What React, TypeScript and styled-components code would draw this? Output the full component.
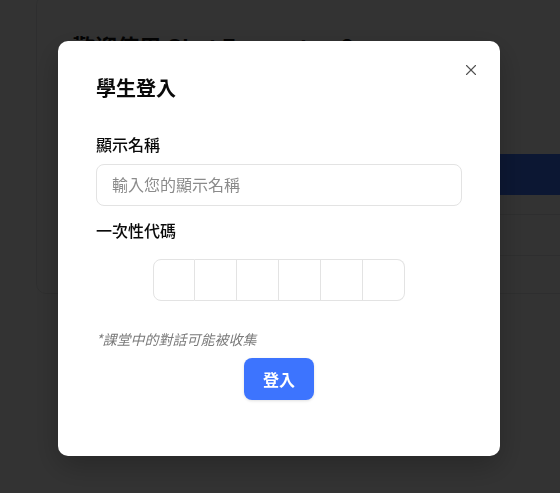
import React from "react";
import styled, { createGlobalStyle } from "styled-components";
import { X } from "lucide-react";

const Global = createGlobalStyle`
  html, body { margin: 0; padding: 0; height: 100%; overflow: hidden; background: #ffffff; }
  body { font-family: "Inter", "Noto Sans CJK TC", "Noto Sans", sans-serif; color: #111; }
  * { box-sizing: border-box; }
`;

const Page = styled.div`
  width: 560px;
  height: 493px;
  padding-left: 36px;
  overflow: hidden;
`;

const BgCard = styled.div`
  margin-top: -5px;
  width: 620px;
  height: 299px;
  border: 1px solid #e6e7ea;
  border-radius: 10px;
  background: #fff;
  padding: 36px 36px;
  display: grid;
  grid-template-columns: 300px 1fr;
  gap: 24px;
`;

const BgTitle = styled.h1`
  margin: 0;
  font-size: 22px;
  line-height: 30px;
  font-weight: 700;
  white-space: nowrap;
  color: #111;
`;

const BgSide = styled.div`
  padding-top: 122px;
  display: flex;
  flex-direction: column;
`;

const BgButton = styled.div`
  height: 41px;
  background: #3d74fe;
  border-radius: 6px 0 0 6px;
`;

const BgRow = styled.div<{ $h: number }>`
  height: ${(p) => p.$h}px;
  border-bottom: 1px solid #e6e7ea;
`;

const Overlay = styled.div`
  position: fixed;
  inset: 0;
  background: rgba(0, 0, 0, 0.8);
  display: flex;
  align-items: flex-start;
  justify-content: flex-start;
  padding: 41px 0 0 58px;
`;

const Modal = styled.div`
  position: relative;
  width: 442px;
  background: #fff;
  border-radius: 10px;
  padding: 34px 38px 56px;
  box-shadow: 0 10px 30px rgba(0, 0, 0, 0.25);
  display: flex;
  flex-direction: column;
`;

const Close = styled.button`
  position: absolute;
  top: 20px;
  right: 20px;
  width: 18px;
  height: 18px;
  padding: 0;
  border: none;
  background: transparent;
  color: #333;
  opacity: 0.85;
  display: flex;
  align-items: center;
  justify-content: center;
  cursor: pointer;
`;

const Title = styled.h2`
  margin: 0;
  font-size: 20px;
  line-height: 28px;
  font-weight: 700;
  color: #0a0a0a;
`;

const Label = styled.div<{ $mt: number }>`
  margin-top: ${(p) => p.$mt}px;
  font-size: 16px;
  line-height: 24px;
  font-weight: 500;
  color: #0a0a0a;
`;

const TextInput = styled.input`
  margin-top: 7px;
  width: 100%;
  height: 42px;
  border: 1px solid #e3e3e3;
  border-radius: 8px;
  padding: 0 15px;
  font-family: inherit;
  font-size: 16px;
  color: #111;
  outline: none;
  &::placeholder { color: #8b8b8b; }
`;

const OtpGroup = styled.div`
  margin-top: 16px;
  display: flex;
  justify-content: center;
`;

const OtpCell = styled.div`
  width: 42px;
  height: 42px;
  border-top: 1px solid #e3e3e3;
  border-bottom: 1px solid #e3e3e3;
  border-right: 1px solid #e3e3e3;
  &:first-child {
    border-left: 1px solid #e3e3e3;
    border-radius: 8px 0 0 8px;
  }
  &:last-child {
    border-radius: 0 8px 8px 0;
  }
`;

const Note = styled.p`
  margin: 28px 0 0;
  font-family: "Noto Sans CJK TC", sans-serif;
  font-size: 14px;
  line-height: 20px;
  font-style: italic;
  color: #7a7a7a;
`;

const Actions = styled.div`
  margin-top: 9px;
  display: flex;
  justify-content: center;
`;

const Submit = styled.button`
  height: 42px;
  padding: 0 19px;
  border: none;
  border-radius: 8px;
  background: #3d74fe;
  color: #fff;
  font-family: inherit;
  font-size: 16px;
  font-weight: 700;
  box-shadow: 0 1px 3px rgba(0, 0, 0, 0.12);
  cursor: pointer;
`;

export default function App() {
  return (
    <>
      <Global />
      <Page>
        <BgCard>
          <BgTitle>歡迎使用 Chat Ecosystem?</BgTitle>
          <BgSide>
            <BgButton />
            <BgRow $h={20} />
            <BgRow $h={41} />
          </BgSide>
        </BgCard>
      </Page>
      <Overlay>
        <Modal>
          <Close aria-label="關閉">
            <X size={18} strokeWidth={1.5} />
          </Close>
          <Title>學生登入</Title>
          <Label $mt={30}>顯示名稱</Label>
          <TextInput placeholder="輸入您的顯示名稱" />
          <Label $mt={13}>一次性代碼</Label>
          <OtpGroup>
            {Array.from({ length: 6 }).map((_, i) => (
              <OtpCell key={i} />
            ))}
          </OtpGroup>
          <Note>*課堂中的對話可能被收集</Note>
          <Actions>
            <Submit>登入</Submit>
          </Actions>
        </Modal>
      </Overlay>
    </>
  );
}
